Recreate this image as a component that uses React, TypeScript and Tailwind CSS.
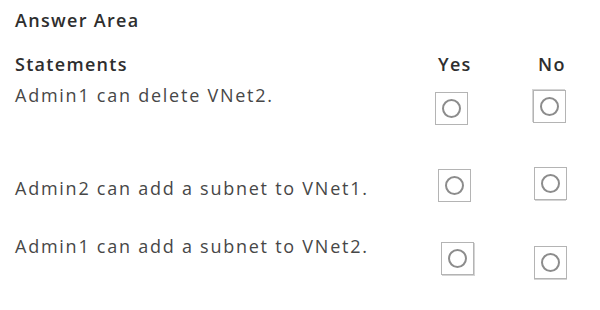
const rows = [
  {
    text: "Admin1 can delete VNet2.",
    row: "h-[84px]",
    textTop: "mt-0",
    yes: "ml-[0px] mt-[9px]",
    no: "ml-[65px] mt-[7px] shadow-[-1px_-1px_0_#d4d4d4]",
  },
  {
    text: "Admin2 can add a subnet to VNet1.",
    row: "h-[67px]",
    textTop: "mt-[9px]",
    yes: "ml-[3px] mt-[2px]",
    no: "ml-[63px] mt-0 shadow-[0_2px_0_-1px_#d4d4d4]",
  },
  {
    text: "Admin1 can add a subnet to VNet2.",
    row: "h-[60px]",
    textTop: "mt-0",
    yes: "ml-[6px] mt-[8px] shadow-[1px_1px_0_#d4d4d4]",
    no: "ml-[60px] mt-[12px] shadow-[0_1px_0_#d4d4d4]",
  },
];

function RadioBox({ className }: { className: string }) {
  return (
    <div
      className={`flex h-[33px] w-[33px] shrink-0 items-center justify-center border border-[#b4b4b4] bg-white ${className}`}
    >
      <span className="h-[19px] w-[19px] rounded-full border-2 border-[#8c8c8c]" />
    </div>
  );
}

export default function App() {
  return (
    <div className="h-[310px] w-[600px] overflow-hidden bg-white pl-[15px] pt-[8px] font-['Open_Sans',sans-serif] text-[18px] leading-[24px] text-[#474747]">
      <div className="h-[44px] font-semibold tracking-[1.3px] text-[#2e2e2e]">Answer Area</div>
      <div className="flex h-[31px] font-semibold tracking-[1.3px] text-[#2e2e2e]">
        <div className="w-[423px]">Statements</div>
        <div className="w-[100px]">Yes</div>
        <div>No</div>
      </div>
      {rows.map((r) => (
        <div key={r.text} className={`flex items-start ${r.row}`}>
          <div className={`w-[420px] shrink-0 tracking-[1.75px] ${r.textTop}`}>{r.text}</div>
          <RadioBox className={r.yes} />
          <RadioBox className={r.no} />
        </div>
      ))}
    </div>
  );
}
